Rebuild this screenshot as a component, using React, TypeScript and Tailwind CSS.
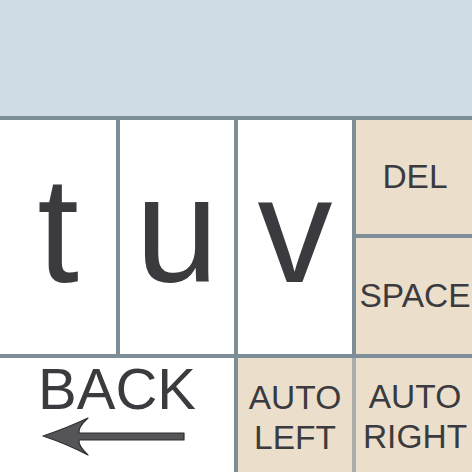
const sans = { fontFamily: '"Liberation Sans", Arial, sans-serif' }

function LetterKey({ letter }: { letter: string }) {
  return (
    <div className="row-span-2 flex items-center justify-center bg-white pb-[14px] text-[150px] leading-none text-[#3b3b3f]">
      {letter}
    </div>
  )
}

function BackArrow() {
  return (
    <svg width="146" height="42" viewBox="0 0 146 42" className="block">
      <path
        d="M2 20 Q26 12 47 2 Q37 11 38 17 L143 17 L143 24 L38 24 Q37 30 47 39 Q26 28 2 20 Z"
        fill="#555558"
        stroke="#2e2e30"
        strokeWidth="1.2"
        strokeLinejoin="round"
      />
    </svg>
  )
}

export default function App() {
  return (
    <div style={sans} className="h-[472px] w-[472px] overflow-hidden bg-[#7e8e98] text-[#3b3b3f]">
      <div className="h-[116px] bg-[#cfdce5]" />
      <div className="grid grid-cols-[116px_114px_114px_118px] grid-rows-[114px_116px_114px] gap-[4px] pt-[4px]">
        <LetterKey letter="t" />
        <LetterKey letter="u" />
        <LetterKey letter="v" />
        <div className="flex items-center justify-center bg-[#ebdfcc] text-[33.5px] leading-none">DEL</div>
        <div className="flex items-center justify-center bg-[#ebdfcc] text-[33.5px] leading-none">SPACE</div>

        <div className="col-span-2 flex flex-col items-center justify-center bg-white pb-[10px]">
          <span className="text-[58px] leading-[54px]">BACK</span>
          <div className="-ml-[6px]">
            <BackArrow />
          </div>
        </div>
        <div className="col-span-2 flex">
          <div className="flex w-[114px] flex-col items-center justify-center bg-[#ebdfcc] pt-[6px] text-center text-[33.5px] leading-[40px]">
            <span>AUTO</span>
            <span>LEFT</span>
          </div>
          <div className="w-[4px] bg-[#a9aeac]" />
          <div className="flex flex-1 flex-col items-center justify-center bg-[#ebdfcc] pt-[4px] text-center text-[33.5px] leading-[40px]">
            <span>AUTO</span>
            <span>RIGHT</span>
          </div>
        </div>
      </div>
    </div>
  )
}
